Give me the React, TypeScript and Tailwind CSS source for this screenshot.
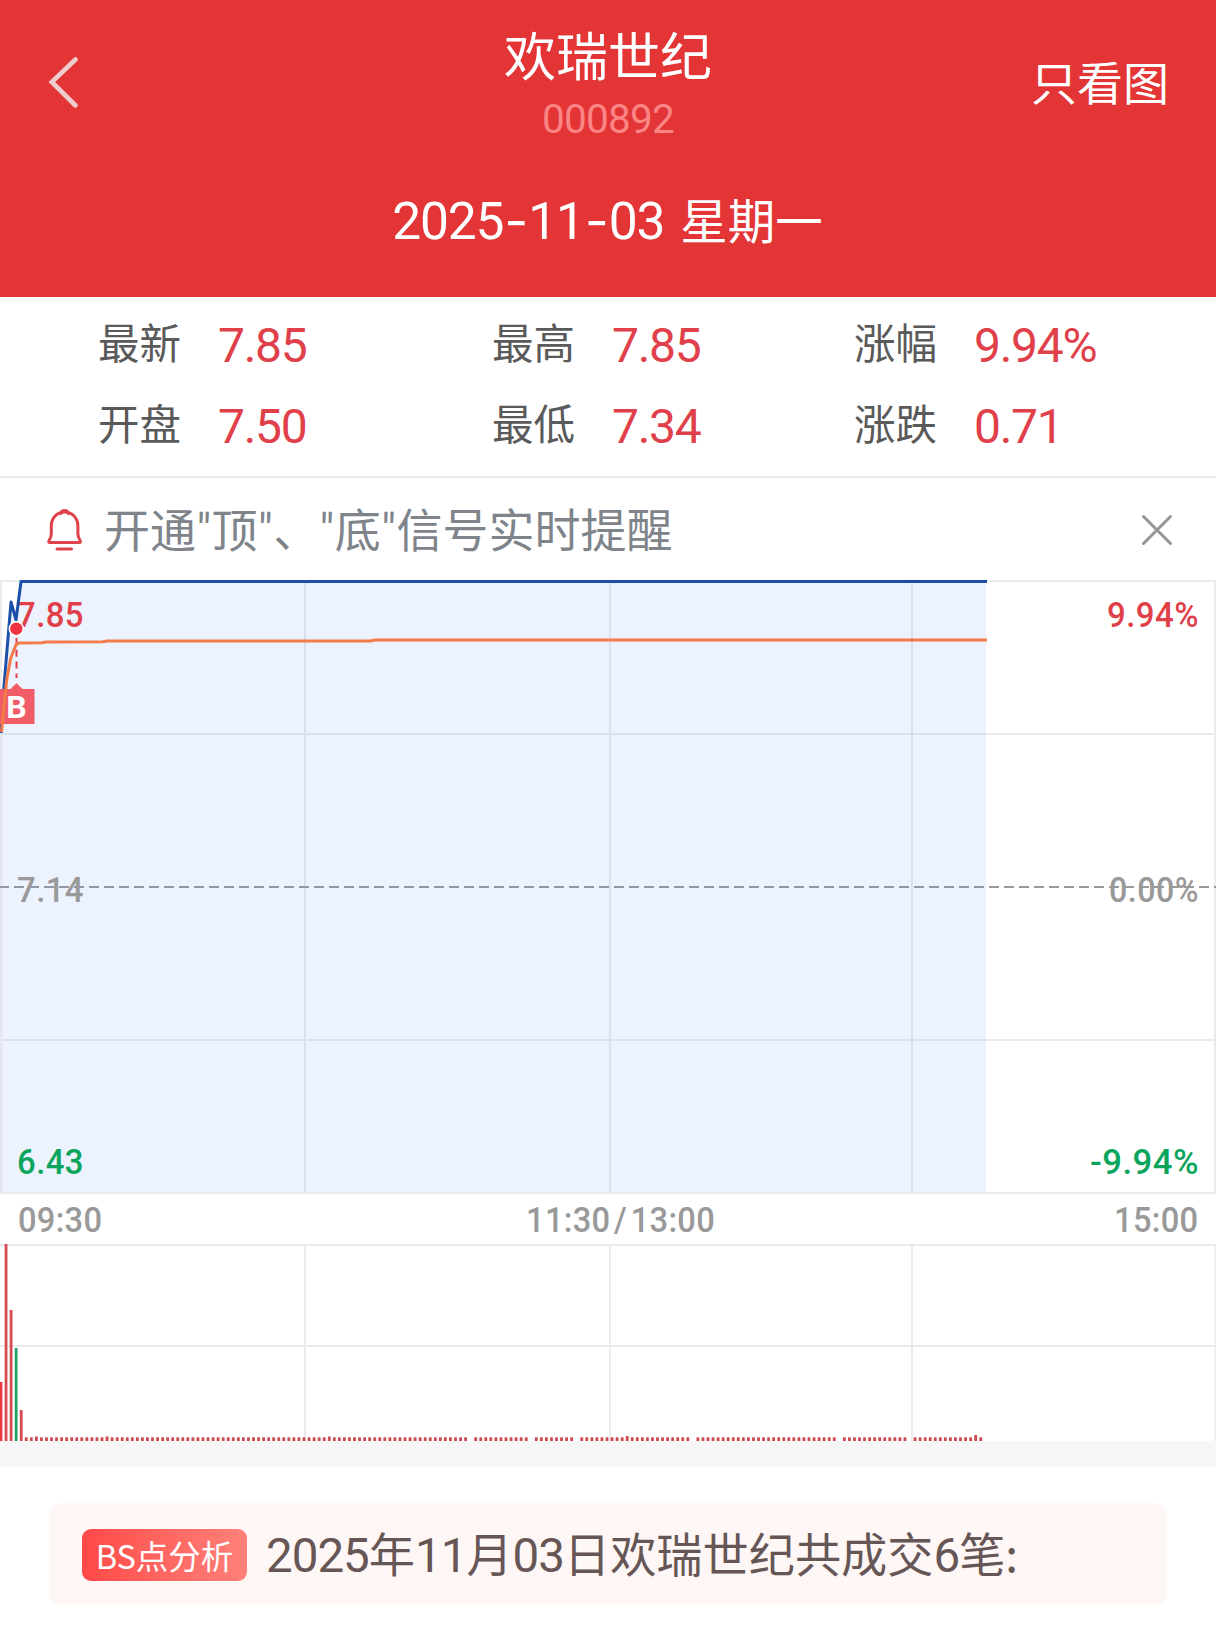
import type { ReactNode } from 'react';

const stats = [
  { label: '最新', value: '7.85' },
  { label: '最高', value: '7.85' },
  { label: '涨幅', value: '9.94%' },
  { label: '开盘', value: '7.50' },
  { label: '最低', value: '7.34' },
  { label: '涨跌', value: '0.71' }
];

const GRID = '#ebebeb';
const RED = '#e03f49';
const GREEN = '#0aa55d';
const GREY = '#999999';

const axisLabels = [
  { y: 47, price: '7.85', percent: '9.94%', width: 92, color: RED },
  { y: 322, price: '7.14', percent: '0.00%', width: 90, color: GREY },
  { y: 594, price: '6.43', percent: '-9.94%', width: 109, color: GREEN }
];

// Minutes without any trade
const emptyMinutes = [93, 105, 114, 137, 166, 180];

const openingBars = [
  { height: 59, color: '#ea3743' },
  { height: 197, color: '#d84a52' },
  { height: 131, color: '#d84a52' },
  { height: 93, color: '#21a366' },
  { height: 31, color: '#d84a52' }
];

const minuteHeights: Record<number, number> = { 7: 4.5, 21: 4.5, 65: 4.5, 124: 5, 193: 6 };

const bars = Array.from({ length: 195 }, (_, i) => ({
  x: 1 + i * 5.05,
  height: openingBars[i]?.height ?? minuteHeights[i] ?? 3.7,
  color: openingBars[i]?.color ?? '#cf4a50',
  hidden: emptyMinutes.includes(i)
})).filter((bar) => !bar.hidden);

function Num({ children }: { children: ReactNode }) {
  return <span className="font-['Roboto',sans-serif] text-[47.5px] tracking-[-1px]">{children}</span>;
}

function Header() {
  return (
    <header className="h-[297px] bg-[#e33436] text-white">
      <div className="grid h-[166px] grid-cols-[1fr_auto_1fr]">
        <button className="flex items-start pl-[48px] pt-[55px]" aria-label="返回">
          <svg width="32" height="54" viewBox="0 0 32 54" fill="none">
            <path
              d="M27.5 4.5 3.8 27l23.7 23.5"
              stroke="#efcdcd"
              strokeWidth="4.6"
              strokeLinecap="round" />
          </svg>
        </button>
        <div className="flex flex-col items-center pt-[23px]">
          <h1 className="text-[52px] leading-[62px]">欢瑞世纪</h1>
          <span className="mt-[9px] font-['Roboto',sans-serif] text-[40.5px] leading-[50px] tracking-[-0.8px] text-[#fb8585]">
            000892
          </span>
        </div>
        <button className="flex items-start justify-end pr-[47px] pt-[50px] text-[46px] leading-[60px]">
          只看图
        </button>
      </div>
      <div className="flex items-baseline justify-center pr-[1px] font-['Roboto',sans-serif] text-[51.5px] leading-[106px] tracking-[-1.2px]">
        <span>2025</span>
        <span className="w-[25px] text-center font-['Inter',sans-serif]">-</span>
        <span>11</span>
        <span className="w-[25px] text-center font-['Inter',sans-serif]">-</span>
        <span>03</span>
        <span className="ml-[16px] font-['Noto_Sans_CJK_SC',sans-serif] text-[47.5px] tracking-normal">
          星期一
        </span>
      </div>
    </header>
  );
}

function Stats() {
  return (
    <section className="grid h-[181px] grid-cols-[394px_362px_1fr] grid-rows-[81px_81px] border-b-2 border-[#ececec] pl-[98px] pt-[3px]">
      {stats.map((item) => (
        <div key={item.label} className="flex items-center whitespace-nowrap">
          <span className="w-[120px] text-[41.5px] leading-[60px] text-[#5a5a5a]">
            {item.label}
          </span>
          <span className="pt-[10px] font-['Roboto',sans-serif] text-[48px] leading-[60px] tracking-[-1.3px] text-[#e0404a]">
            {item.value}
          </span>
        </div>
      ))}
    </section>
  );
}

function Quote() {
  return <span className="inline-block w-[15.6px] text-center font-['Roboto',sans-serif]">&quot;</span>;
}

function Notice() {
  return (
    <section className="flex h-[102px] items-center justify-between pl-[46px] pr-[43px]">
      <div className="flex items-center">
        <svg
          width="38"
          height="46"
          viewBox="0 0 38 46"
          fill="none"
          className="mt-[2px]"
          stroke="#df424b"
          strokeWidth="3"
          strokeLinejoin="round"
          strokeLinecap="round">
          <path d="M14.800 6.500a3.900 3.900 0 0 1 7.600 0" />
          <path d="M18.600 5C11 5 5.300 11.200 5.300 19v8c0 2.600-1 4.400-2.100 6.200-.900 1.600-.600 2.400.900 2.400h29c1.500 0 1.800-.800.900-2.400-1.100-1.800-2.100-3.600-2.100-6.200v-8C31.900 11.200 26.200 5 18.600 5Z" />
          <path d="M11 42h14.500" />
        </svg>
        <p className="ml-[20px] whitespace-nowrap text-[46px] leading-[60px] text-[#7f848b]">
          开通
          <Quote />顶<Quote />、<Quote />底<Quote />
          信号实时提醒
        </p>
      </div>
      <button aria-label="关闭">
        <svg width="32" height="32" viewBox="0 0 32 32" className="mt-[2px]" stroke="#959595" strokeWidth="3" strokeLinecap="round">
          <path d="M2.500 2.500l27 27M29.500 2.500l-27 27" />
        </svg>
      </button>
    </section>
  );
}

function PriceChart() {
  return (
    <svg width="1216" height="614" viewBox="0 0 1216 614" className="block font-['Roboto',sans-serif]">
      <g stroke={GRID} strokeWidth="2">
        <path d="M0 1H1216M0 154H1216M0 460H1216M0 613H1216" />
        <path d="M1 0V614M305 0V614M610 0V614M912 0V614M1215 0V614" />
      </g>
      <path d="M0 307H1216" stroke="#999" strokeWidth="2" strokeDasharray="10 5" strokeDashoffset="1" />
      <path d="M1 153 4 105 11 22 16 40 21 1H986V612H1Z" fill="#4f86f7" fillOpacity="0.11" />

      <g fontSize="35.500" fontWeight="500" letterSpacing="0.500">
        {axisLabels.map((label) => (
          <g key={label.price} fill={label.color}>
            <text x="17" y={label.y} textLength="67" lengthAdjust="spacingAndGlyphs">
              {label.price}
            </text>
            <text x={1199 - label.width} y={label.y} textLength={label.width} lengthAdjust="spacingAndGlyphs">
              {label.percent}
            </text>
          </g>
        ))}
      </g>

      <path d="M1 153 4 106 11 22 16 40 21 1.500H987" fill="none" stroke="#1c4fa8" strokeWidth="3" strokeLinejoin="round" />

      <path d="M16.500 58V98" stroke={RED} strokeWidth="2" strokeDasharray="7 4.800" />
      <path d="M0 109H10.500L16.500 103 22.500 109H34.500V144H0Z" fill="#f05c67" />
      <text x="16.500" y="138" fontSize="32" fontWeight="700" fill="#fff" textAnchor="middle">B</text>
      <path
        d="M1.500 152 6.700 100 10.700 78.300 15.700 65.500Q17 63 20 63L42 62.800 46 62 103 61.800 107 61 370 61 375 60H987"
        fill="none"
        stroke="#f37b48"
        strokeWidth="3"
        strokeLinejoin="round" />
      <circle cx="16.300" cy="48.700" r="7" fill="#ef3340" stroke="#fff" strokeWidth="1.500" />
    </svg>
  );
}

function TimeAxis() {
  return (
    <div className="grid h-[50px] grid-cols-3 px-[18px] font-['Roboto',sans-serif] text-[35.5px] font-medium leading-[52px] tracking-[0.3px] text-[#999]">
      <span className="origin-left scale-x-92">09:30</span>
      <span className="flex scale-x-92 justify-center pl-[28px]">
        11:30<span className="px-[4px]">/</span>13:00
      </span>
      <span className="origin-right scale-x-92 text-right">15:00</span>
    </div>
  );
}

function VolumeChart() {
  return (
    <svg width="1216" height="197" viewBox="0 0 1216 197" className="block">
      <g stroke={GRID} strokeWidth="2">
        <path d="M0 1H1216M0 102H1216" />
        <path d="M305 0V197M610 0V197M912 0V197M1215.500 0V197" />
      </g>
      {bars.map((bar) => (
        <rect key={bar.x} x={bar.x - 1.4} y={197 - bar.height} width="2.800" height={bar.height} fill={bar.color} />
      ))}
    </svg>
  );
}

function Analysis() {
  return (
    <section className="mx-[49px] mt-[36px] flex h-[102px] items-center rounded-[12px] bg-[#fff7f6] pl-[33px]">
      <span className="mt-[2px] flex h-[52px] w-[165px] items-center justify-center rounded-[9px] bg-linear-to-r from-[#ff4848] to-[#ff8079] text-[32.5px] text-white">
        BS点分析
      </span>
      <p className="ml-[19px] whitespace-nowrap pb-[1px] text-[46.2px] leading-[60px] text-[#665655]">
        <Num>2025</Num>年<Num>11</Num>月<Num>03</Num>日欢瑞世纪共成交<Num>6</Num>笔:
      </p>
    </section>
  );
}

export default function App() {
  return (
    <main className="h-[1625px] w-[1216px] overflow-hidden bg-white font-['Noto_Sans_CJK_SC',sans-serif]">
      <Header />
      <Stats />
      <Notice />
      <PriceChart />
      <TimeAxis />
      <VolumeChart />
      <div className="h-[26px] bg-[#f6f6f6]" />
      <Analysis />
    </main>
  );
}
